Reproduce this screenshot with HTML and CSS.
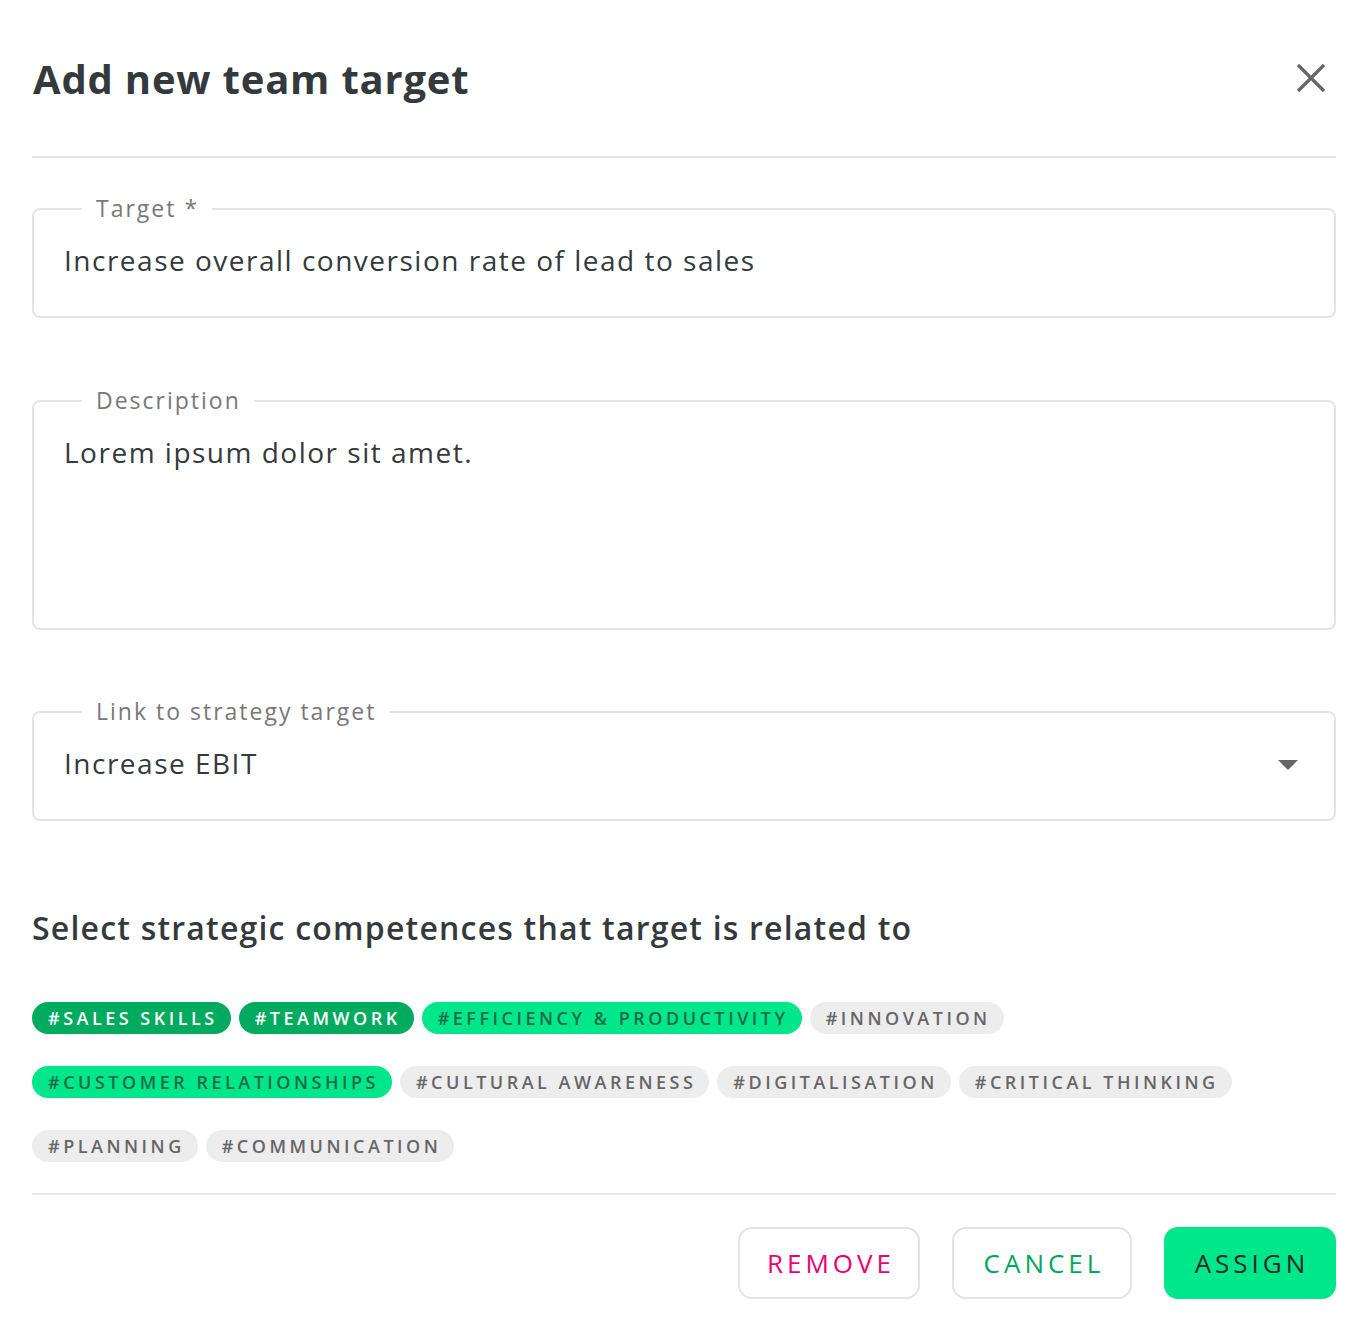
FILE: index.html
```html
<!DOCTYPE html>
<html lang="en">
<head>
<meta charset="utf-8">
<title>Add new team target</title>
<link rel="stylesheet" href="styles.css">
</head>
<body>
<div class="dialog">
  <header class="dialog-header">
    <h1 class="dialog-title">Add new team target</h1>
    <button class="close-btn" aria-label="Close">
      <svg width="30" height="30" viewBox="0 0 30 30"><path d="M2 2 L28 28 M28 2 L2 28" stroke="#666" stroke-width="3.2" stroke-linecap="butt" fill="none"/></svg>
    </button>
  </header>

  <div class="field field-target">
    <span class="field-label">Target *</span>
    <div class="field-value">Increase overall conversion rate of lead to sales</div>
  </div>

  <div class="field field-desc">
    <span class="field-label">Description</span>
    <div class="field-value">Lorem ipsum dolor sit amet.</div>
  </div>

  <div class="field field-select">
    <span class="field-label">Link to strategy target</span>
    <div class="field-value">Increase EBIT</div>
    <span class="caret"></span>
  </div>

  <h2 class="section-title">Select strategic competences that target is related to</h2>

  <div class="chips">
    <span class="chip chip-dark">#Sales skills</span>
    <span class="chip chip-dark">#Teamwork</span>
    <span class="chip chip-bright">#Efficiency &amp; productivity</span>
    <span class="chip">#Innovation</span>
    <span class="chip chip-bright">#Customer relationships</span>
    <span class="chip">#Cultural awareness</span>
    <span class="chip">#Digitalisation</span>
    <span class="chip">#Critical thinking</span>
    <span class="chip">#Planning</span>
    <span class="chip">#Communication</span>
  </div>

  <footer class="dialog-footer">
    <button class="btn btn-remove">Remove</button>
    <button class="btn btn-cancel">Cancel</button>
    <button class="btn btn-assign">Assign</button>
  </footer>
</div>
</body>
</html>
```

FILE: styles.css
```css
* { box-sizing: border-box; }
html, body { margin: 0; padding: 0; background: #fff; }
body {
  font-family: "Open Sans", "Noto Sans", sans-serif;
  color: #343a3c;
}
.dialog {
  width: 1368px;
  padding: 0 32px;
}
.dialog-header {
  height: 158px;
  display: flex;
  align-items: center;
  justify-content: space-between;
  border-bottom: 2px solid #e6e6e6;
}
.dialog-title {
  margin: 0;
  font-size: 40px;
  font-weight: 700;
  letter-spacing: 0.8px;
  color: #343a3c;
  padding-left: 1px;
}
.close-btn {
  border: 0;
  background: none;
  padding: 0;
  margin-right: 10px;
  width: 30px;
  height: 30px;
  display: flex;
}
.field {
  position: relative;
  border: 2px solid #e4e4e4;
  border-radius: 8px;
  padding: 32px 30px 34px;
  height: 110px;
}
.field-target { margin-top: 50px; }
.field-desc { margin-top: 82px; height: 230px; }
.field-select { margin-top: 81px; }
.field-label {
  position: absolute;
  top: -18px;
  left: 48px;
  padding: 0 13px 0 14px;
  background: #fff;
  font-size: 23px;
  line-height: 32px;
  color: #787878;
  letter-spacing: 2px;
}
.field-value {
  font-size: 28px;
  line-height: 36px;
  color: #343a3c;
  letter-spacing: 1.5px;
}
.caret {
  position: absolute;
  right: 36px;
  top: 47px;
  width: 0;
  height: 0;
  border-left: 10px solid transparent;
  border-right: 10px solid transparent;
  border-top: 10px solid #666;
}
.section-title {
  margin: 87px 0 0;
  font-size: 32px;
  line-height: 40px;
  font-weight: 600;
  color: #343a3c;
  letter-spacing: 1.2px;
}
.chips {
  margin-top: 54px;
  display: flex;
  flex-wrap: wrap;
  column-gap: 8px;
  row-gap: 32px;
  padding-bottom: 31px;
  border-bottom: 2px solid #e6e6e6;
}
.chip {
  height: 32px;
  border-radius: 16px;
  padding: 0 13px 0 16px;
  display: inline-flex;
  align-items: center;
  background: #ededed;
  color: #666;
  font-size: 18px;
  font-weight: 600;
  text-transform: uppercase;
  letter-spacing: 3.5px;
}
.chip-dark { background: #00aa5e; color: #fff; }
.chip-bright { background: #00e68a; color: #1b6b47; }
.dialog-footer {
  display: flex;
  justify-content: flex-end;
  gap: 32px;
  padding-top: 32px;
}
.btn {
  height: 72px;
  padding: 0;
  border-radius: 14px;
  border: 2px solid #e4e4e4;
  background: #fff;
  font-family: "Open Sans", "Noto Sans", sans-serif;
  font-size: 26px;
  font-weight: 500;
  text-transform: uppercase;
  letter-spacing: 4px;
  text-indent: 4px;
}
.btn-remove { color: #ec0070; width: 182px; }
.btn-cancel { color: #00a85a; width: 180px; }
.btn-assign { background: #00e68a; border-color: #00e68a; color: #1e2b2a; width: 172px; }
```
